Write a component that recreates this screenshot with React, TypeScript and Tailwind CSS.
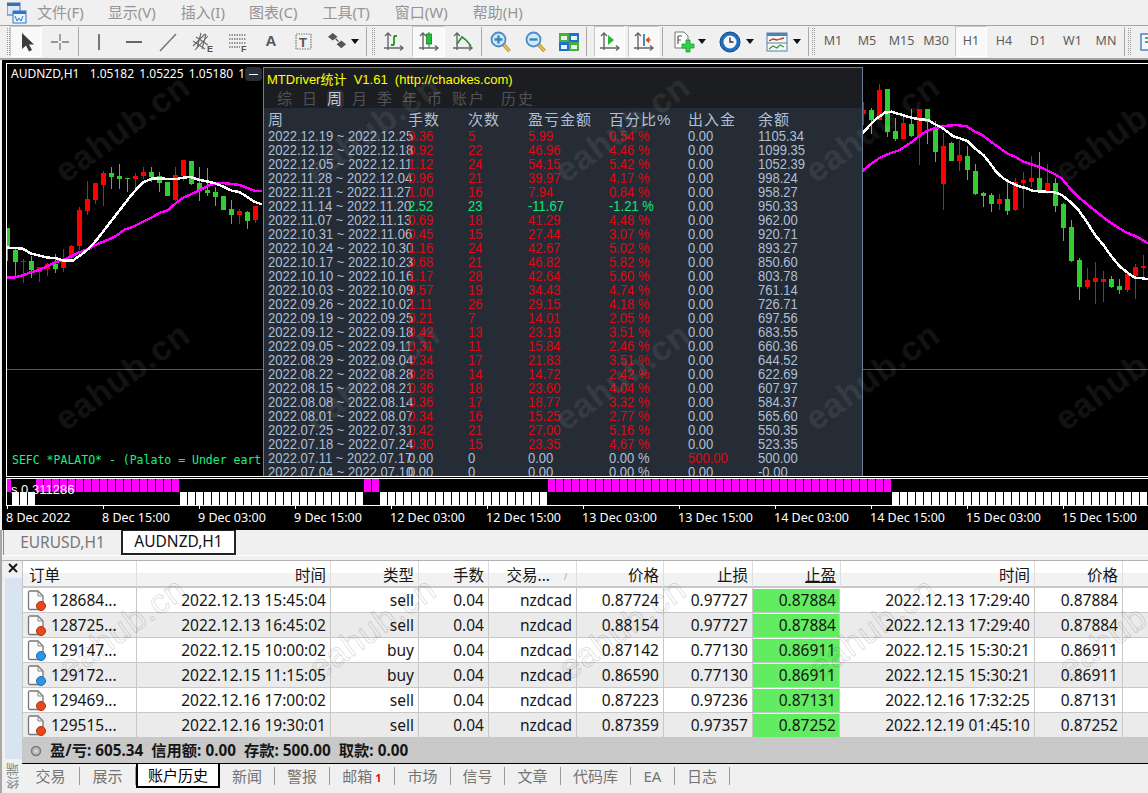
import React from "react";

const CJK = "font-['Noto_Sans','Noto_Sans_CJK_SC',sans-serif]";

type C = [number, 0 | 1, number, number, number, number];
// x, 0=green 1=red, wick top, wick bottom, body top, body bottom (in 3x crop units)
const leftC: C[] = [
  [22, 0, 490, 590, 490, 550], [46, 0, 545, 635, 555, 590], [70, 1, 582, 653, 588, 591], [94, 0, 572, 638, 588, 615],
  [118, 1, 605, 650, 605, 620], [142, 1, 595, 635, 597, 612], [166, 0, 567, 623, 597, 612], [190, 1, 552, 622, 592, 611],
  [214, 1, 540, 585, 543, 580], [238, 1, 425, 555, 435, 543], [262, 1, 348, 450, 402, 438], [286, 1, 354, 416, 354, 405],
  [310, 1, 318, 422, 323, 359], [334, 0, 306, 372, 324, 335], [358, 0, 297, 372, 333, 342], [382, 0, 339, 381, 339, 341],
  [406, 1, 325, 372, 333, 342], [430, 1, 306, 342, 321, 333], [454, 0, 306, 350, 321, 336], [478, 0, 321, 381, 333, 354],
  [502, 0, 351, 393, 351, 393], [526, 1, 306, 408, 330, 405], [550, 1, 285, 348, 285, 333], [574, 0, 288, 360, 288, 357],
  [598, 0, 306, 408, 354, 375], [622, 0, 309, 393, 375, 384], [646, 0, 366, 423, 381, 396], [670, 0, 393, 435, 393, 435],
  [694, 0, 405, 477, 432, 450], [718, 1, 432, 477, 438, 450], [742, 0, 438, 492, 441, 468], [766, 1, 423, 474, 423, 465],
];
const rightC: C[] = [
  [10, 1, 110, 180, 135, 147], [34, 0, 128, 207, 135, 165], [58, 1, 57, 165, 75, 165], [82, 0, 72, 215, 72, 201],
  [106, 0, 160, 228, 198, 222], [130, 1, 150, 222, 174, 222], [154, 0, 132, 215, 177, 213], [178, 1, 132, 300, 132, 213],
  [202, 0, 132, 237, 132, 170], [226, 0, 168, 291, 192, 261], [250, 1, 204, 435, 243, 357], [274, 0, 231, 288, 234, 288],
  [298, 1, 225, 318, 270, 288], [322, 0, 243, 345, 273, 315], [346, 0, 297, 390, 318, 387], [370, 0, 381, 426, 384, 393],
  [394, 0, 384, 441, 390, 417], [418, 1, 387, 435, 402, 417], [442, 0, 351, 450, 402, 438], [466, 1, 339, 438, 351, 435],
  [490, 1, 321, 429, 345, 354], [514, 1, 273, 366, 339, 351], [538, 0, 261, 378, 339, 378], [562, 1, 297, 387, 354, 378],
  [586, 0, 339, 441, 354, 423], [610, 0, 414, 528, 417, 489], [634, 0, 465, 591, 486, 588], [658, 0, 579, 705, 585, 666],
  [682, 1, 609, 672, 645, 666], [706, 1, 591, 717, 639, 651], [730, 1, 618, 711, 642, 651], [754, 0, 633, 669, 642, 666],
  [778, 0, 642, 687, 663, 675], [802, 1, 627, 681, 627, 675], [826, 1, 597, 702, 606, 633], [850, 1, 570, 640, 603, 609],
];
const lw = "22,548 45,549 68,551 92,565 118,572 145,578 165,579 190,587 218,587 245,568 265,552 290,525 315,492 340,460 365,428 390,395 410,372 430,352 455,341 480,340 505,342 530,342 550,338 570,336 595,344 620,349 645,355 670,365 695,377 718,381 742,396 765,411 786,418";
const lm = "22,638 45,637 68,631 92,622 118,615 142,603 166,592 190,585 214,574 238,562 262,553 290,538 315,528 345,515 375,493 400,485 430,470 460,455 480,443 505,435 530,412 550,398 575,387 600,375 625,362 645,355 670,354 695,357 720,360 745,370 765,378 786,378";
const rw = "8,205 30,180 50,160 75,143 95,140 120,148 150,157 178,163 205,165 225,178 245,188 262,200 278,213 300,220 322,228 345,250 370,270 390,295 410,322 430,340 450,352 480,365 500,370 520,378 555,380 585,382 605,390 630,410 655,435 680,470 705,510 730,540 755,575 780,605 805,625 825,638 850,640 864,643";
const rm = "8,317 35,295 60,278 90,265 120,255 150,235 175,215 200,198 225,190 245,184 265,182 290,180 320,184 345,200 370,212 395,232 420,250 445,267 465,275 490,290 520,300 550,310 580,325 605,340 630,370 660,400 690,425 715,445 740,465 770,485 800,503 830,515 864,535";

function Candles({ data, ox }: { data: C[]; ox: number }) {
  return (
    <g>
      {data.map(([x, red, wt, wb, bt, bb], i) => {
        const cx = Math.round(ox + x / 3);
        const col = red ? "#ff0000" : "#32cd32";
        return (
          <g key={i} fill={col}>
            <rect x={cx} y={65 + Math.round(wt / 3)} width={1} height={Math.round((wb - wt) / 3)} />
            <rect x={cx - 2} y={65 + Math.round(bt / 3)} width={5} height={Math.max(1, Math.round((bb - bt) / 3))} />
          </g>
        );
      })}
    </g>
  );
}

function MainChart() {
  return (
    <svg className="absolute inset-0" width="1141" height="412" viewBox="7 64 1141 412" shapeRendering="crispEdges">
      <line x1="0" x2="1148" y1="369.5" y2="369.5" stroke="#d800d8" />
      <Candles data={leftC} ox={0} />
      <Candles data={rightC} ox={860} />
      <g transform="translate(0 65) scale(.33333)" fill="none" strokeWidth="7.5">
        <polyline points={lm} stroke="#ff00ff" />
        <polyline points={lw} stroke="#ffffff" />
      </g>
      <g transform="translate(860 65) scale(.33333)" fill="none" strokeWidth="7.5">
        <polyline points={rm} stroke="#ff00ff" />
        <polyline points={rw} stroke="#ffffff" />
      </g>
    </svg>
  );
}

function SubChart() {
  const bars: React.ReactNode[] = [];
  const seg = (from: number, to: number, col: string, y: number) => {
    for (let x = from; x < to; x += 8) bars.push(<rect key={col + x} x={x} y={y} width={7} height={13} fill={col} />);
  };
  seg(12, 36, "#ffffff", 492);
  seg(36, 180, "#ff00ff", 479);
  seg(180, 364, "#ffffff", 492);
  seg(364, 380, "#ff00ff", 479);
  seg(380, 548, "#ffffff", 492);
  seg(548, 892, "#ff00ff", 479);
  seg(892, 1148, "#ffffff", 492);
  return (
    <svg className="absolute inset-0" width="1141" height="26" viewBox="7 479 1141 26" shapeRendering="crispEdges">
      <rect x={7} y={479} width={4} height={13} fill="#ff00ff" />
      {bars}
    </svg>
  );
}

type PR = [string, string, string, string, string, string, string];
const rowsP: PR[] = [
  ["2022.12.19 ~ 2022.12.25", "0.36", "5", "5.99", "0.54 %", "0.00", "1105.34"],
  ["2022.12.12 ~ 2022.12.18", "0.92", "22", "46.96", "4.46 %", "0.00", "1099.35"],
  ["2022.12.05 ~ 2022.12.11", "1.12", "24", "54.15", "5.42 %", "0.00", "1052.39"],
  ["2022.11.28 ~ 2022.12.04", "0.96", "21", "39.97", "4.17 %", "0.00", "998.24"],
  ["2022.11.21 ~ 2022.11.27", "1.00", "16", "7.94", "0.84 %", "0.00", "958.27"],
  ["2022.11.14 ~ 2022.11.20", "2.52", "23", "-11.67", "-1.21 %", "0.00", "950.33"],
  ["2022.11.07 ~ 2022.11.13", "0.69", "18", "41.29", "4.48 %", "0.00", "962.00"],
  ["2022.10.31 ~ 2022.11.06", "0.45", "15", "27.44", "3.07 %", "0.00", "920.71"],
  ["2022.10.24 ~ 2022.10.30", "1.16", "24", "42.67", "5.02 %", "0.00", "893.27"],
  ["2022.10.17 ~ 2022.10.23", "0.68", "21", "46.82", "5.82 %", "0.00", "850.60"],
  ["2022.10.10 ~ 2022.10.16", "1.17", "28", "42.64", "5.60 %", "0.00", "803.78"],
  ["2022.10.03 ~ 2022.10.09", "0.57", "19", "34.43", "4.74 %", "0.00", "761.14"],
  ["2022.09.26 ~ 2022.10.02", "1.11", "26", "29.15", "4.18 %", "0.00", "726.71"],
  ["2022.09.19 ~ 2022.09.25", "0.21", "7", "14.01", "2.05 %", "0.00", "697.56"],
  ["2022.09.12 ~ 2022.09.18", "0.42", "13", "23.19", "3.51 %", "0.00", "683.55"],
  ["2022.09.05 ~ 2022.09.11", "0.31", "11", "15.84", "2.46 %", "0.00", "660.36"],
  ["2022.08.29 ~ 2022.09.04", "0.34", "17", "21.83", "3.51 %", "0.00", "644.52"],
  ["2022.08.22 ~ 2022.08.28", "0.28", "14", "14.72", "2.42 %", "0.00", "622.69"],
  ["2022.08.15 ~ 2022.08.21", "0.36", "18", "23.60", "4.04 %", "0.00", "607.97"],
  ["2022.08.08 ~ 2022.08.14", "0.36", "17", "18.77", "3.32 %", "0.00", "584.37"],
  ["2022.08.01 ~ 2022.08.07", "0.34", "16", "15.25", "2.77 %", "0.00", "565.60"],
  ["2022.07.25 ~ 2022.07.31", "0.42", "21", "27.00", "5.16 %", "0.00", "550.35"],
  ["2022.07.18 ~ 2022.07.24", "0.30", "15", "23.35", "4.67 %", "0.00", "523.35"],
  ["2022.07.11 ~ 2022.07.17", "0.00", "0", "0.00", "0.00 %", "500.00", "500.00"],
  ["2022.07.04 ~ 2022.07.10", "0.00", "0", "0.00", "0.00 %", "0.00", "-0.00"],
];

function PCell({ t, c }: { t: string; c: string }) {
  return <span className={`block whitespace-nowrap origin-left scale-x-[0.84] ${c}`}>{t}</span>;
}

function Panel() {
  const tabs: [string, string][] = [["综", "w-[25px]"], ["日", "w-[25px]"], ["周", "w-[25px]"], ["月", "w-[25px]"], ["季", "w-[25px]"], ["年", "w-[25px]"], ["币", "w-[25px]"], ["账户", "w-[49px]"], ["历史", "w-[40px]"]];
  const blue = "text-[#aebfd6]";
  const red = "text-[#dc0a14]";
  const green = "text-[#12e67a]";
  return (
    <div className="absolute left-[256px] top-[3px] w-[600px] h-[409px] flex flex-col border border-[#6d7d93] border-b-0 bg-[#252c35] overflow-hidden font-['Liberation_Sans','Noto_Sans_CJK_SC',sans-serif]">
      <div className="h-[40px] bg-[#1b1d20] shrink-0">
        <div className="h-[22px] pl-[3px] pt-[1px] text-[13px] leading-[21px] text-[#ffff00] whitespace-pre">MTDriver统计  V1.61  (http://chaokes.com)</div>
        <div className="flex pl-[13px] h-[18px] text-[15px] leading-[18px] text-[#4f5357]">
          {tabs.map(([t, w]) => (
            <div key={t} className={`${w} flex`}>
              <span className={`rounded-sm tracking-[2px] ${t === "周" ? "bg-[#2a3039] text-[#c4ccd6]" : ""}`}>{t}</span>
            </div>
          ))}
        </div>
      </div>
      <div className={`grid grid-cols-[140px_60px_60px_81px_79px_70px_1fr] pl-[4px] pt-[3px] h-[21px] shrink-0 text-[15px] leading-[18px] tracking-[1px] ${blue}`}>
        {["周", "手数", "次数", "盈亏金额", "百分比%", "出入金", "余额"].map((h) => (
          <span key={h} className="whitespace-nowrap">{h}</span>
        ))}
      </div>
      <div className="flex flex-col text-[15.5px]">
        {rowsP.map((r, i) => {
          const col = r[3] === "0.00" ? blue : r[3].startsWith("-") ? green : red;
          return (
            <div key={i} className="grid grid-cols-[140px_60px_60px_81px_79px_70px_1fr] pl-[4px] h-[14px] leading-[14px]">
              <PCell t={r[0]} c={blue} />
              <PCell t={r[1]} c={col} />
              <PCell t={r[2]} c={col} />
              <PCell t={r[3]} c={col} />
              <PCell t={r[4]} c={col} />
              <PCell t={r[5]} c={r[5] === "500.00" ? red : blue} />
              <PCell t={r[6]} c={blue} />
            </div>
          );
        })}
      </div>
    </div>
  );
}

const Grip = ({ ml = "ml-0" }: { ml?: string }) => (
  <div className={`${ml} w-[3px] h-[27px] shrink-0 border-x border-dotted border-[#9a9a9a]`} />
);
const Sep = ({ c = "w-[2px]" }: { c?: string }) => <div className={`${c} h-[29px] shrink-0 border-l border-[#a8a8a8]`} />;
const Btn = ({ w, on, children }: { w: string; on?: boolean; children?: React.ReactNode }) => (
  <div className={`${w} h-[31px] shrink-0 flex items-center justify-center ${on ? "bg-[#f9f9f9] border border-b-white border-r-white border-t-[#c8c8c8] border-l-[#c8c8c8]" : ""}`}>
    {children}
  </div>
);
const Caret = () => <svg width="8" height="5" viewBox="0 0 8 5"><path d="M0 0h8L4 5z" fill="#111" /></svg>;
const I = ({ children, s = 22 }: { children: React.ReactNode; s?: number }) => (
  <svg width={s} height={s} viewBox="0 0 22 22" className="shrink-0">{children}</svg>
);
const Axes = () => (
  <g stroke="#666" strokeWidth="1.4" fill="none">
    <path d="M5 2v17M2 5l3-3 3 3M1 17h19M17 14.5l3 2.5-3 2.5" />
  </g>
);
const Glass = ({ plus }: { plus: boolean }) => (
  <I>
    <path d="M13 13l6.5 7" stroke="#b08a20" strokeWidth="3.4" />
    <path d="M13 13l6.5 7" stroke="#f2cf4e" strokeWidth="1.6" />
    <circle cx="8.5" cy="8.5" r="7" fill="#cfe9fb" stroke="#4c8dc4" strokeWidth="1.8" />
    <path d={plus ? "M4.5 8.5h8M8.5 4.5v8" : "M4.5 8.5h8"} stroke="#3a82bf" strokeWidth="2.4" />
  </I>
);
const M = ({ t, w, on }: { t: string; w: string; on?: boolean }) => (
  <Btn w={w} on={on}><span className="text-[12.5px] text-[#5c5c5c] font-['Noto_Sans',sans-serif]">{t}</span></Btn>
);

function Toolbar() {
  return (
    <div className="h-[34px] flex items-center border-b-2 border-[#a4a4a4] pb-[1px] shrink-0">
      <Grip ml="ml-[7px]" />
      <Btn w="w-[32px]" on>
        <I><path d="M7 2v16l4-3.5 3 6 3-1.5-3-5.5h5z" fill="#3c3c3c" /></I>
      </Btn>
      <Btn w="w-[36px]"><I><path d="M11 3v7M11 12v7M2 11h7M13 11h7" stroke="#777" strokeWidth="1.3" /></I></Btn>
      <Sep c="w-[3px]" />
      <Btn w="w-[36px]"><I><path d="M11 3v16" stroke="#777" strokeWidth="2" /></I></Btn>
      <Btn w="w-[34px]"><I><path d="M3 11h16" stroke="#666" strokeWidth="2" /></I></Btn>
      <Btn w="w-[34px]"><I><path d="M3 20L19 3" stroke="#777" strokeWidth="1.6" /></I></Btn>
      <Btn w="w-[35px]">
        <I><path d="M1 15L13 3M3 19L16 5M1 10l12 8M4 6l12 8M9 2l-4 15M14 3l-4 15" stroke="#666" strokeWidth="1.1" fill="none" /><text x="15" y="21" fontSize="9" fontWeight="700" fill="#555" fontFamily="Liberation Sans">E</text></I>
      </Btn>
      <Btn w="w-[36px]">
        <I><path d="M2 4h17M2 8h17M2 12h17M2 16h11" stroke="#777" strokeWidth="1.4" strokeDasharray="1.5 1" /><text x="14" y="21" fontSize="9" fontWeight="700" fill="#555" fontFamily="Liberation Sans">F</text></I>
      </Btn>
      <Btn w="w-[30px]"><span className="font-['Liberation_Sans'] font-bold text-[15px] text-[#555]">A</span></Btn>
      <Btn w="w-[36px]">
        <I><rect x="3" y="3" width="15" height="15" fill="none" stroke="#777" strokeWidth="1.2" strokeDasharray="1.5 1" /><text x="6" y="16" fontSize="13" fontWeight="700" fill="#555" fontFamily="Liberation Sans">T</text></I>
      </Btn>
      <div className="w-[42px] shrink-0 flex items-center pl-[5px] gap-[3px]">
        <I s={21}><path d="M6 2l5 4-5 4-5-4zM15 10l5 4-5 4-5-4z" fill="#555" /><path d="M9 8l3 3" stroke="#555" strokeWidth="1.4" /></I>
        <Caret />
      </div>
      <Sep c="w-[3px] ml-[2px]" />
      <Grip ml="ml-[3px]" />
      <Btn w="w-[37px]">
        <I><Axes /><path d="M11 5v9M11 5h3M11 14H8" stroke="#1a9a2a" strokeWidth="1.8" fill="none" /></I>
      </Btn>
      <Btn w="w-[33px]" on>
        <I><Axes /><path d="M11 1v16" stroke="#1a8a2a" strokeWidth="1" /><rect x="8.5" y="3" width="5" height="10" fill="#22c03a" stroke="#167a26" strokeWidth=".8" /></I>
      </Btn>
      <Btn w="w-[36px]">
        <I><Axes /><path d="M5 13l5-7 4 3 5 6" stroke="#2e8a3a" strokeWidth="1.6" fill="none" /></I>
      </Btn>
      <Sep />
      <Btn w="w-[36px]"><Glass plus /></Btn>
      <Btn w="w-[33px]"><Glass plus={false} /></Btn>
      <Btn w="w-[34px]">
        <I>
          <rect x="1" y="2" width="10" height="9" fill="#4caf3a" /><rect x="11" y="2" width="10" height="9" fill="#1f6fd0" />
          <rect x="1" y="11" width="10" height="9" fill="#1f6fd0" /><rect x="11" y="11" width="10" height="9" fill="#4caf3a" />
          <path d="M3 5h6v4H3zM13 5h6v4h-6zM3 14h6v4H3zM13 14h6v4h-6z" fill="#e8f2ea" />
        </I>
      </Btn>
      <Sep />
      <div className="w-[6px] shrink-0" />
      <Btn w="w-[31px]" on>
        <I><Axes /><path d="M9 4l6 5-6 5z" fill="#2bb53a" /></I>
      </Btn>
      <div className="w-[3px] shrink-0" />
      <Btn w="w-[31px]" on>
        <I><Axes /><path d="M11 3v12" stroke="#1a70b8" strokeWidth="1.6" /><path d="M18 9h-3M13 9l3-2.5v5z" fill="#d5531a" stroke="#d5531a" /></I>
      </Btn>
      <Sep c="w-[2px] ml-[3px]" />
      <div className="w-[44px] shrink-0 flex items-center pl-[9px] gap-[3px]">
        <I>
          <path d="M2 1h9l4 4v12H2z" fill="#fdfdfd" stroke="#777" />
          <path d="M5 5v8M5 5h4M5 9h3" stroke="#555" strokeWidth="1.2" fill="none" />
          <path d="M13 9h4v4h4v4h-4v4h-4v-4H9v-4h4z" fill="#2fd04a" stroke="#1c9a30" strokeWidth=".8" />
        </I>
        <Caret />
      </div>
      <div className="w-[48px] shrink-0 flex items-center pl-[11px] gap-[5px]">
        <I>
          <circle cx="11" cy="11" r="10" fill="#1f6fc0" stroke="#13487f" />
          <circle cx="11" cy="11" r="6.5" fill="#f2f6fa" />
          <path d="M11 6.5V11h3.5" stroke="#333" strokeWidth="1.4" fill="none" />
        </I>
        <Caret />
      </div>
      <div className="w-[47px] shrink-0 flex items-center pl-[10px] gap-[5px]">
        <I>
          <rect x="1" y="2" width="20" height="18" fill="#f6f6f2" stroke="#4f82b5" />
          <rect x="1" y="2" width="20" height="3" fill="#4f82b5" />
          <path d="M3 10l4-2 4 1 3-1 4-1" stroke="#b83a2a" strokeWidth="1.3" fill="none" />
          <path d="M3 18l4-3 4 2 3-3 4 2" stroke="#3a9a3a" strokeWidth="1.3" fill="none" />
          <path d="M1 12h20" stroke="#4f82b5" />
        </I>
        <Caret />
      </div>
      <Sep c="w-[2px] ml-[5px]" />
      <Grip ml="ml-[2px]" />
      <M t="M1" w="w-[34px] ml-[1px]" />
      <M t="M5" w="w-[34px]" />
      <M t="M15" w="w-[35px]" />
      <M t="M30" w="w-[34px]" />
      <M t="H1" w="w-[32px] ml-[2px]" on />
      <M t="H4" w="w-[34px]" />
      <M t="D1" w="w-[34px]" />
      <M t="W1" w="w-[35px]" />
      <M t="MN" w="w-[32px]" />
      <Sep c="w-[2px] ml-[2px]" />
      <Grip ml="ml-[2px]" />
      <div className="ml-[9px] w-[20px] shrink-0 overflow-hidden">
        <I><rect x="1" y="3" width="20" height="16" fill="#f4f8fc" stroke="#3c7cc0" strokeWidth="1.4" /><path d="M5 7h5M5 11h5" stroke="#2a8a3a" strokeWidth="1.5" /></I>
      </div>
    </div>
  );
}

function Menu() {
  const items: [string, string][] = [["文件(F)", "ml-[10px]"], ["显示(V)", "ml-[24px]"], ["插入(I)", "ml-[25px]"], ["图表(C)", "ml-[24px]"], ["工具(T)", "ml-[25px]"], ["窗口(W)", "ml-[25px]"], ["帮助(H)", "ml-[25px]"]];
  return (
    <div className={`h-[26px] flex items-center pl-[7px] border-b border-[#a4a4a4] shrink-0 ${CJK}`}>
      <svg width="20" height="22" viewBox="0 0 20 22" className="shrink-0">
        <rect x="0" y="1" width="13" height="12" fill="#dfe8f4" stroke="#3b6fb2" />
        <rect x="0" y="1" width="13" height="3" fill="#3b6fb2" />
        <rect x="6" y="9" width="13" height="12" fill="#eaf2fb" stroke="#2f77c4" />
        <rect x="6" y="9" width="13" height="3" fill="#2f77c4" />
        <path d="M8 14l2 5 2-3 2 3 2-5" stroke="#2f77c4" fill="none" />
      </svg>
      {items.map(([t, m]) => (
        <span key={t} className={`${m} text-[15px] text-[#949494] whitespace-nowrap`}>{t}</span>
      ))}
    </div>
  );
}

function ChartArea() {
  const times = ["8 Dec 2022", "8 Dec 15:00", "9 Dec 03:00", "9 Dec 15:00", "12 Dec 03:00", "12 Dec 15:00", "13 Dec 03:00", "13 Dec 15:00", "14 Dec 03:00", "14 Dec 15:00", "15 Dec 03:00", "15 Dec 15:00"];
  return (
    <div className="relative h-[470px] shrink-0 bg-black ml-[2px] flex flex-col pt-[3px] overflow-hidden">
      <div className="relative h-[414px] shrink-0 ml-[4px] border-t border-l border-b border-white">
        <MainChart />
        <div className="absolute left-[4px] top-[2px] text-[12px] leading-[16px] text-white whitespace-pre [word-spacing:2px] font-['Noto_Sans',sans-serif]">AUDNZD,H1  1.05182 1.05225 1.05180 1.</div>
        <div className="absolute left-[5px] top-[388px] text-[11.5px] leading-[16px] text-[#1cf080] whitespace-pre font-['DejaVu_Sans_Mono',monospace]">SEFC *PALATO* - (Palato = Under eart</div>
        <Panel />
        <div className="absolute left-[238px] top-[3px] w-[17px] h-[14px] rounded-sm bg-[#262d36] flex items-center justify-center">
          <div className="w-[9px] h-[1px] bg-white" />
        </div>
      </div>
      <div className="relative h-[28px] shrink-0 ml-[4px] mt-[1px] border-t border-l border-b border-white">
        <SubChart />
        <span className="absolute left-[4px] top-[3px] text-[13px] leading-[16px] text-white font-['Liberation_Sans',sans-serif]">s 0 311286</span>
      </div>
      <div className="flex ml-[4px] h-[24px] shrink-0">
        {times.map((t) => (
          <div key={t} className="w-[96px] shrink-0 flex flex-col items-start">
            <div className="ml-[1px] w-[1px] h-[3px] bg-white" />
            <span className="text-[12.5px] leading-[15px] mt-[1px] text-white whitespace-nowrap font-['Noto_Sans',sans-serif]">{t}</span>
          </div>
        ))}
      </div>
      <div className="mt-auto h-[2px] bg-white shrink-0" />
    </div>
  );
}

type TR = [string, string, string, string, string, string, string, string];
const tr: TR[] = [
  ["128684...", "2022.12.13 15:45:04", "sell", "0.87724", "0.97727", "0.87884", "2022.12.13 17:29:40", "0.87884"],
  ["128725...", "2022.12.13 16:45:02", "sell", "0.88154", "0.97727", "0.87884", "2022.12.13 17:29:40", "0.87884"],
  ["129147...", "2022.12.15 10:00:02", "buy", "0.87142", "0.77130", "0.86911", "2022.12.15 15:30:21", "0.86911"],
  ["129172...", "2022.12.15 11:15:05", "buy", "0.86590", "0.77130", "0.86911", "2022.12.15 15:30:21", "0.86911"],
  ["129469...", "2022.12.16 17:00:02", "sell", "0.87223", "0.97236", "0.87131", "2022.12.16 17:32:25", "0.87131"],
  ["129515...", "2022.12.16 19:30:01", "sell", "0.87359", "0.97357", "0.87252", "2022.12.19 01:45:10", "0.87252"],
];
const COLS = "grid grid-cols-[114px_194px_88px_70px_88px_87px_89px_88px_194px_88px_26px]";

function OrderIcon({ buy }: { buy: boolean }) {
  return (
    <svg width="22" height="22" viewBox="0 0 22 22" className="shrink-0">
      <path d="M2.5 2.5q0-1.5 1.5-1.5h8l5 5v12q0 1.5-1.5 1.5H4q-1.500 0-1.500-1.500z" fill="#fbfbfb" stroke="#777" strokeWidth="1.3" />
      <path d="M12 1v5h5" fill="none" stroke="#888" />
      <circle cx="15" cy="16" r="4.500" fill={buy ? "#2b95e8" : "#e8481a"} stroke={buy ? "#1a6db0" : "#b03210"} />
    </svg>
  );
}

function HeadCell({ t, left, u, sort }: { t: string; left?: boolean; u?: boolean; sort?: boolean }) {
  return (
    <div className={`relative flex items-center h-full pt-[3px] border-r border-[#dedede] whitespace-nowrap ${left ? "justify-start pl-[6px]" : "justify-end pr-[4px]"} ${sort ? "pr-[26px]" : ""}`}>
      <span className={u ? "underline" : ""}>{t}</span>
      {sort ? <span className="absolute right-[9px] top-[10px] text-[8px] text-[#999]">/</span> : null}
    </div>
  );
}

function Cell({ t, c = "" }: { t: string; c?: string }) {
  return <div className={`flex items-center justify-end pr-[4px] border-r border-[#c8c8c8] whitespace-nowrap ${c}`}>{t}</div>;
}

function Terminal() {
  const btabs: [string, string][] = [["交易", "w-[58px]"], ["展示", "w-[56px]"]];
  const rest: [string, string][] = [["新闻", "w-[55px]"], ["警报", "w-[55px]"], ["邮箱", "w-[65px]"], ["市场", "w-[56px]"], ["信号", "w-[54px]"], ["文章", "w-[56px]"], ["代码库", "w-[70px]"], ["EA", "w-[44px]"], ["日志", "w-[55px]"]];
  return (
    <div className={`flex flex-col flex-1 min-h-0 border-l-2 border-[#a8a8a8] text-[#161616] ${CJK}`}>
      <div className="h-[25px] flex shrink-0 pl-[1px] text-[15.5px]">
        <div className="w-[118px] flex items-center justify-center text-[#777] border-l border-[#888]">EURUSD,H1</div>
        <div className="w-[115px] flex items-center justify-center bg-white border-x-2 border-b-2 border-t border-[#222] text-[#111]">AUDNZD,H1</div>
      </div>
      <div className="h-[5px] shrink-0 border-t border-white" />
      <div className="flex flex-1 min-h-0 border-t border-[#b0b0b0]">
        <div className="w-[20px] shrink-0 flex flex-col pl-[3px]">
          <svg width="14" height="14" viewBox="0 0 14 14" className="mb-[3px] ml-[1px]"><path d="M3 3l8 8M11 3l-8 8" stroke="#111" strokeWidth="1.8" /></svg>
          <div className="h-[181px] bg-[#d8e4f0]" />
          <div className="[writing-mode:vertical-rl] rotate-180 text-[13px] leading-[16px] text-[#7d8a8a] h-[30px]">终端</div>
        </div>
        <div className="flex-1 min-w-0 flex flex-col text-[15.5px]">
          <div className={`${COLS} h-[27px] shrink-0 border-b-2 border-[#c8c8c8] bg-gradient-to-b from-white from-50% to-[#f2f2f2] to-50% border-l border-l-[#c8c8c8]`}>
            <HeadCell t="订单" left />
            <HeadCell t="时间" />
            <HeadCell t="类型" />
            <HeadCell t="手数" />
            <HeadCell t="交易..." sort />
            <HeadCell t="价格" />
            <HeadCell t="止损" />
            <HeadCell t="止盈" u />
            <HeadCell t="时间" />
            <HeadCell t="价格" />
            <div />
          </div>
          {tr.map((r, i) => (
            <div key={i} className={`${COLS} h-[25px] shrink-0 border-b border-[#c8c8c8] border-l border-l-[#c8c8c8] ${i % 2 ? "bg-[#ebebeb]" : "bg-white"}`}>
              <div className="flex items-center gap-[3px] pl-[3px] border-r border-[#c8c8c8] whitespace-nowrap">
                <OrderIcon buy={r[2] === "buy"} />
                <span>{r[0]}</span>
              </div>
              <Cell t={r[1]} />
              <Cell t={r[2]} />
              <Cell t="0.04" />
              <Cell t="nzdcad" />
              <Cell t={r[3]} />
              <Cell t={r[4]} />
              <div className="flex items-center justify-end pr-[3px] mr-[1px] bg-[#62ec62] border-r border-[#c8c8c8] my-[1px]">{r[5]}</div>
              <Cell t={r[6]} />
              <Cell t={r[7]} />
              <div />
            </div>
          ))}
          <div className="h-[25px] shrink-0 bg-[#c9c9c9] flex items-center pl-[8px] gap-[8px] text-[15.3px] font-bold whitespace-pre">
            <svg width="12" height="12" viewBox="0 0 12 12"><circle cx="6" cy="6" r="4.500" fill="#bbb" stroke="#777" strokeWidth="1.5" /><circle cx="6" cy="6" r="1.500" fill="#ddd" /></svg>
            <span>盈/亏: 605.34  信用额: 0.00  存款: 500.00  取款: 0.00</span>
          </div>
          <div className="h-[25px] shrink-0 flex border-t border-black text-[15px] text-[#747474]">
            {btabs.map(([t, w]) => (
              <div key={t} className={`${w} h-[18px] mt-[3px] flex items-center justify-center border-r border-[#9a9a9a] last:border-r-0`}>{t}</div>
            ))}
            <div className="w-[84px] h-[24px] flex items-center justify-center bg-white border-x-2 border-b-2 border-black text-black">账户历史</div>
            {rest.map(([t, w]) => (
              <div key={t} className={`${w} h-[18px] mt-[3px] flex items-center justify-center border-r border-[#9a9a9a]`}>
                {t}
                {t === "邮箱" ? <span className="ml-[3px] mt-[5px] text-[11px] font-bold text-[#e01010]">1</span> : null}
              </div>
            ))}
          </div>
        </div>
      </div>
    </div>
  );
}

const WM_DARK = [
  "left-[37px] top-[106px]", "left-[287px] top-[106px]", "left-[537px] top-[106px]", "left-[787px] top-[106px]", "left-[1037px] top-[106px]",
  "left-[37px] top-[354px]", "left-[287px] top-[354px]", "left-[537px] top-[354px]", "left-[787px] top-[354px]", "left-[1037px] top-[354px]",
];
const WM_LIGHT = ["left-[37px] top-[606px]", "left-[287px] top-[606px]", "left-[537px] top-[606px]", "left-[787px] top-[606px]", "left-[1037px] top-[606px]"];

export default function App() {
  return (
    <div className="relative w-[1148px] h-[793px] overflow-hidden flex flex-col bg-[#f0f0f0]">
      <Menu />
      <Toolbar />
      <ChartArea />
      <Terminal />
      {WM_DARK.map((p) => (
        <span key={p} className={`absolute ${p} w-[170px] text-center rotate-[-36deg] pointer-events-none text-[34px] leading-[44px] font-bold tracking-[1px] text-white/[0.07] font-['Liberation_Sans',sans-serif]`}>eahub.cn</span>
      ))}
      {WM_LIGHT.map((p) => (
        <span key={p} className={`absolute ${p} w-[170px] text-center rotate-[-36deg] pointer-events-none text-[34px] leading-[44px] tracking-[1px] text-transparent [-webkit-text-stroke:1px_rgba(0,0,0,0.14)] font-['Liberation_Sans',sans-serif]`}>eahub.cn</span>
      ))}
    </div>
  );
}
